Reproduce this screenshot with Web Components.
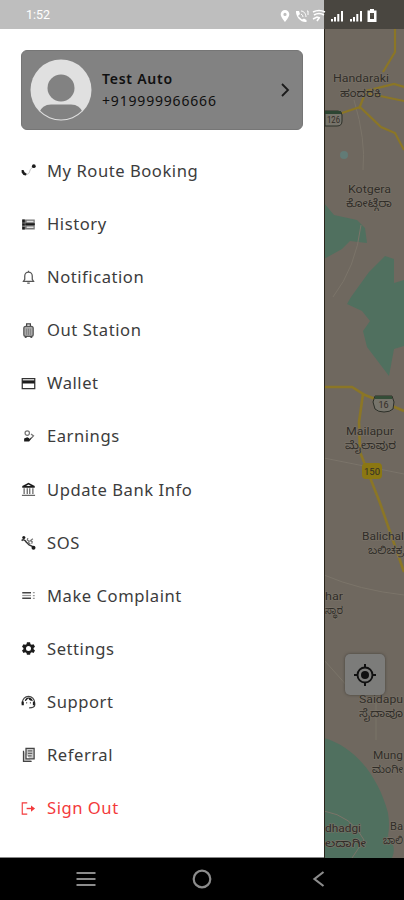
<!DOCTYPE html>
<html lang="en">
<head>
<meta charset="utf-8">
<title>Driver menu</title>
<style>
html,body{margin:0;height:100%;background:#000;font-family:"Noto Sans","Open Sans",sans-serif}
</style>
</head>
<body>
<phone-screen></phone-screen>
<script>
const define = (name, html, setup) => customElements.define(name, class extends HTMLElement {
  connectedCallback() {
    if (this.shadowRoot) return;
    const t = document.createElement('template');
    t.innerHTML = html;
    this.attachShadow({mode: 'open'}).append(t.content.cloneNode(true));
    if (setup) setup(this, this.shadowRoot);
  }
});

const icons = {
  route: '<path d="M6 15c3 5 7 3 8-2 1-4 3-5 5-6" fill="none" stroke="#bbb" stroke-width="1.5"/><path d="M1 11h3l2 4 3 2-1 3-4-1-3-4z"/><circle cx="20.5" cy="5" r="3"/>',
  history: '<path d="M2 4h20v16H2z" fill="#777"/><path d="M2 4h4v16H2zM7 10h15v3H7z"/><path d="M9 6h11v2.5H9zM9 15h11v2.500H9z" fill="#ddd"/><path d="M2 9h5v1H2zM2 14h5v1H2z" fill="#ccc"/>',
  bell: '<path d="M4 18h16l-2-3V9.500a6 6 0 0 0-12 0V15zM12 1v3M10 21h4" fill="none" stroke="#555" stroke-width="2"/>',
  luggage: '<path d="M9 6V1.500h6V6" fill="none" stroke="#444" stroke-width="2"/><rect x="4.500" y="5.500" width="15" height="16" rx="3" fill="#aaa" stroke="#555" stroke-width="2"/><path d="M9 9v10M12 9v10M15 9v10" stroke="#777" stroke-width="1.300"/><path d="M6 22h3v1.500H6zM15 22h3v1.500h-3z"/>',
  card: '<path d="M2 4h20v16H2z" fill="#fff" stroke="#333" stroke-width="2"/><path d="M2 7h20v5H2z"/>',
  earn: '<circle cx="10" cy="6.500" r="3.500" fill="none" stroke="#777" stroke-width="2"/><path d="M5 15l5-2 4 2 6-4-7 9H5z"/><path d="M16 8l4 3-4 4" fill="none" stroke="#777" stroke-width="2"/><path d="M13 15l3-1.500-3 3z" fill="#fff"/>',
  bank: '<path d="M12 1L2 6.500V9h20V6.500z"/><path d="M12 4l4 2.500H8z" fill="#fff"/><path d="M5 10v9M10 10v9M14 10v9M19 10v9M1.500 21.500h21" stroke="#666" stroke-width="2"/>',
  sos: '<circle cx="4.500" cy="4" r="2.500"/><path d="M1 9c3-3 6 0 7 2l5 5 5 2 2 3" fill="none" stroke="#333" stroke-width="2.300"/><path d="M11 5l-1 3 3 2-1 3 3 1M19 6l-4 3 3 2-1 3" fill="none" stroke="#777" stroke-width="2"/><circle cx="20" cy="20.500" r="3.200"/>',
  list: '<path d="M2 7.500h14M2 16.500h14" stroke="#444" stroke-width="2.500"/><path d="M2 12h14" stroke="#999" stroke-width="2"/><path d="M19 7.500h3M19 12h3M19 16.500h3" stroke="#999" stroke-width="2"/>',
  gear: '<path fill-rule="evenodd" d="M9.500 2h5l.7 3 2 1 2.900-1L22.400 9l-2.300 2v2l2.300 2-2.300 4-2.900-1-2 1-.7 3h-5l-.7-3-2-1-2.900 1L1.600 15l2.300-2v-2L1.600 9l2.300-4 2.900 1 2-1zM12 8a4 4 0 1 0 0 8 4 4 0 0 0 0-8z"/>',
  support: '<path d="M2 15C2 0 22 0 22 15v2c0 4-3 5-9 5" fill="none" stroke="#444" stroke-width="2"/><path d="M1 12h3.500v6H1zM19 12h3v6h-3zM6 11c4 0 4-4 6-4 1 3 4 4 7 4-3-7-11-7-13 0z"/><circle cx="9" cy="14" r="1"/><circle cx="15" cy="14" r="1"/>',
  referral: '<path d="M8 2h13v17H8zM4 6v17h13" fill="#ccc" stroke="#444" stroke-width="2"/><path d="M11 6h7M11 10h7M11 14h6" stroke="#666" stroke-width="2"/>',
  exit: '<path d="M10 3H2v18h8" fill="none" stroke="currentColor" stroke-width="1.800"/><path d="M9 12h9" stroke="currentColor" stroke-width="2.200"/><path d="M16 7l6.500 5-6.500 5z" fill="currentColor"/>'
};

define('menu-item', `<style>
:host{display:flex;align-items:center;height:53.1px;padding-left:21px;color:#3c3c3c;font-size:16.6px;letter-spacing:.54px;white-space:nowrap;line-height:24px}
svg{width:15px;height:15px;margin-right:11px;fill:#1c1c1c;flex:none}
:host([icon=exit]){color:#f3393b}
</style><svg viewBox="0 0 24 24"></svg><span><slot></slot></span>`,
 (el, root) => { root.querySelector('svg').innerHTML = icons[el.getAttribute('icon')]; });

define('profile-card', `<style>
:host{display:flex;align-items:center;box-sizing:border-box;width:282px;height:80px;margin:50px 0 0 21px;padding:0 12px 0 8px;border-radius:6px;background:#828282;border:1px solid #767676;color:#101010}
.avatar{width:62px;height:62px;flex:none}
.who{flex:1;margin-left:10px;display:flex;flex-direction:column;font-size:14px;line-height:22px;white-space:nowrap}
.name{font-weight:600;letter-spacing:.75px}.tel{letter-spacing:.82px}
.go{width:10px;height:16px}
</style>
<svg class="avatar" viewBox="0 0 62 62"><defs><clipPath id="c"><circle cx="31" cy="31" r="29.500"/></clipPath></defs><circle cx="31" cy="31" r="30.500" fill="#e0e0e0"/><g clip-path="url(#c)" fill="#828282"><circle cx="31" cy="29" r="13.500"/><path d="M9 54q3-8.500 12-8.500h20q9 0 12 8.500v8H9z"/></g></svg>
<div class="who"><span class="name"><slot name="name"></slot></span><span class="tel"><slot name="phone"></slot></span></div>
<svg class="go" viewBox="0 0 10 16"><path d="M2 2l6 6-6 6" fill="none" stroke="#1a1a1a" stroke-width="1.800"/></svg>`);

define('nav-drawer', `<style>
:host{display:block;box-sizing:border-box;width:324px;height:858px;background:#fff;border-bottom:1px solid #888;overflow:hidden}
nav{display:flex;flex-direction:column;margin-top:14.4px}
</style><slot name="profile"></slot><nav><slot></slot></nav>`);

define('status-bar', `<style>
:host{display:flex;justify-content:space-between;align-items:center;box-sizing:border-box;width:404px;height:29px;padding:2px 25px 0 26px;background:linear-gradient(90deg,#bebebe 324px,#494640 324px);color:#fff;font:12.500px/16px Roboto,sans-serif}
time{padding-bottom:1px}
svg{width:102px;height:18px}
</style><time>1:52</time>
<svg viewBox="277 6 102 18" fill="#fff"><path fill-rule="evenodd" d="M285 9a4.300 4.300 0 0 0-4.300 4.300c0 3 4.300 7.700 4.300 7.700s4.300-4.700 4.300-7.700A4.300 4.300 0 0 0 285 9zm0 2.800a1.600 1.600 0 1 1 0 3.200 1.600 1.600 0 0 1 0-3.200z"/><path d="M296 10l3 0 1 3-2 2 4 3.500 2-1 2.500 1.500v2c-5 1-11-5-10.500-11z"/><path d="M301 10c3 0 5 3 5 6M301 13q2 1 2 3M307 10h1v4" fill="none" stroke="#fff"/><path d="M313 11q6-3 12 0M314 14q5-3 10 0M313 18l4-2 3 1M317 20l2-3" fill="none" stroke="#fff" stroke-width="1.600"/>
<path d="M331 18h2v2.500h-2zM334 16h2v4.500h-2zM337.300 13h2v7.500h-2zM341 10h2v10.500h-2zM350 18h2v2.500h-2zM353 16h2v4.500h-2zM356.300 13h2v7.500h-2zM360 10h2v10.500h-2z"/><path fill-rule="evenodd" d="M370 8h4v1.500h2.500V21h-9V9.500h2.500zm0 4v6h4v-6z"/><path d="M370.500 12h3v3h-3z" fill="#55514a"/></svg>`);

define('area-map', `<style>
:host{display:block;width:80px;height:858px;position:relative;background:#6f685f;overflow:hidden}
svg{display:block}
text{font-family:Roboto,"Noto Sans","Noto Sans Kannada",sans-serif;font-size:11.500px;fill:#302d28;stroke:#7a7368;stroke-width:1.200px;paint-order:stroke}
.kn{font-size:11px}
.locate{position:absolute;left:21px;top:654px;width:40px;height:41px;border-radius:5px;background:#7c7c7a;box-shadow:0 0 3px #45413b;display:grid;place-items:center}
</style>
<svg width="80" height="858" viewBox="324 0 80 858">
<g fill="#50705f"><path d="M324 203l10 12 23 5 8 8 2 15-17-2-8 8-18 10z"/><path d="M351 297l18-25 16-16 9 3 0 24 10-3v66l-10 3-5 27-22-29-4-16 7-10-8-10-15-7z"/><path d="M324 738c32 9 55 40 64 75q2 12 0 23 9 11 4 22h-68z"/></g>
<circle cx="344" cy="155" r="4" fill="#627b76"/>
<path d="M324 811q28 5 40 29l-12 18M354 100q12 40 9 70M333 297q23-30 28-72M324 575q35 15 80 20M324 660l25 28M376 700v40M324 458l80 16" fill="none" stroke="#7b7469"/>
<g fill="none" stroke="#8b7626" stroke-width="2.500"><path d="M324 118l18-5 18-6 21 20 14 6 9 17M359 109l7-18 28-7 10 3M383 72l12-20V0M366 93l38 8" stroke-width="2.200"/><path d="M324 387h28l13 8 20 8 19 8M363 394l-4 28 1 30 20 51 24 69" stroke-width="2.600"/></g>
<path d="M325 111h13q4 0 4 4v6q0 5-5 5h-12z" fill="#77756c" stroke="#2d3029"/><path d="M325 111h16v3h-16z" fill="#2d4532"/><text x="327" y="123" style="font-size:9px" textLength="13" lengthAdjust="spacingAndGlyphs">126</text>
<path d="M375 396h17l2 6-1 7q-3 3-9 3t-9-3l-2-7z" fill="#77756c" stroke="#2d3029"/><path d="M375 396h17v3h-17z" fill="#344d37"/><text x="378.500" y="408" style="font-size:9px" textLength="10">16</text>
<rect x="362" y="463" width="20" height="16" rx="4" fill="#8b7712"/><text x="364" y="475" style="font-size:9.500px;stroke:none" textLength="16">150</text>
<text x="333" y="82" textLength="56" lengthAdjust="spacingAndGlyphs">Handaraki</text><text class="kn" x="340" y="97" textLength="41" lengthAdjust="spacingAndGlyphs">ಹಂದರಕಿ</text>
<text x="348" y="193" textLength="43" lengthAdjust="spacingAndGlyphs">Kotgera</text><text class="kn" x="346" y="207" textLength="46" lengthAdjust="spacingAndGlyphs">ಕೋಟ್ಗೆರಾ</text>
<text x="346" y="435" textLength="48" lengthAdjust="spacingAndGlyphs">Mailapur</text><text class="kn" x="345" y="449" textLength="51" lengthAdjust="spacingAndGlyphs">ಮೈಲಾಪುರ</text>
<text x="362" y="540" textLength="42" lengthAdjust="spacingAndGlyphs">Balichal</text><text class="kn" x="368" y="554" textLength="36" lengthAdjust="spacingAndGlyphs">ಬಲಿಚಕ್ರ</text>
<text x="325" y="600" textLength="18" lengthAdjust="spacingAndGlyphs">har</text><text class="kn" x="325" y="614" textLength="18" lengthAdjust="spacingAndGlyphs">ಸ್ಥಾರ</text>
<text x="359" y="703" textLength="44" lengthAdjust="spacingAndGlyphs">Saidapu</text><text class="kn" x="359" y="717" textLength="44" lengthAdjust="spacingAndGlyphs">ಸೈದಾಪೂ</text>
<text x="373" y="759" textLength="30" lengthAdjust="spacingAndGlyphs">Mung</text><text class="kn" x="372" y="773" textLength="31" lengthAdjust="spacingAndGlyphs">ಮಂಗೀ</text>
<text x="325" y="832" textLength="36" lengthAdjust="spacingAndGlyphs">dhadgi</text><text class="kn" x="325" y="847" textLength="41" lengthAdjust="spacingAndGlyphs">ಲದಾಗೀ</text>
<text x="390" y="830" textLength="13" lengthAdjust="spacingAndGlyphs">Ba</text><text class="kn" x="383" y="844" textLength="20" lengthAdjust="spacingAndGlyphs">ಬಾಲಿ</text>
<path d="M324.500 0v858" stroke="#29251c"/>
</svg>
<div class="locate"><svg width="24" height="24" viewBox="0 0 24 24"><circle cx="12" cy="12" r="4" fill="#111"/><circle cx="12" cy="12" r="7.500" fill="none" stroke="#111" stroke-width="1.900"/><path d="M12 1v4M12 19v4M1 12h4M19 12h4" stroke="#111" stroke-width="2"/></svg></div>`);

define('system-nav', `<style>
:host{display:grid;grid-template-columns:1fr 1fr 1fr;justify-items:center;align-items:center;height:42px;width:349px;padding:0 27px 0 28px;background:#000}
svg{width:22px;height:22px;fill:none;stroke:#8c8c8c;stroke-width:2.200}
</style>
<svg viewBox="0 0 22 22"><path d="M1.500 5h19M1.500 11h19M1.500 17h19"/></svg><svg viewBox="0 0 22 22"><circle cx="11" cy="11" r="8.300"/></svg><svg viewBox="0 0 22 22"><path d="M15.500 4l-9 7 9 7"/></svg>`);

define('phone-screen', `<style>
:host{display:flex;flex-direction:column;width:404px;height:900px;overflow:hidden;position:relative}
main{display:flex;height:858px}
status-bar{position:absolute;top:0;left:0}
</style>
<main><nav-drawer>
<profile-card slot="profile"><span slot="name">Test Auto</span><span slot="phone">+919999966666</span></profile-card>
<menu-item icon="route">My Route Booking</menu-item>
<menu-item icon="history">History</menu-item>
<menu-item icon="bell">Notification</menu-item>
<menu-item icon="luggage">Out Station</menu-item>
<menu-item icon="card">Wallet</menu-item>
<menu-item icon="earn">Earnings</menu-item>
<menu-item icon="bank">Update Bank Info</menu-item>
<menu-item icon="sos">SOS</menu-item>
<menu-item icon="list">Make Complaint</menu-item>
<menu-item icon="gear">Settings</menu-item>
<menu-item icon="support">Support</menu-item>
<menu-item icon="referral">Referral</menu-item>
<menu-item icon="exit">Sign Out</menu-item>
</nav-drawer><area-map></area-map></main>
<status-bar></status-bar><system-nav></system-nav>`);
</script>
</body>
</html>
